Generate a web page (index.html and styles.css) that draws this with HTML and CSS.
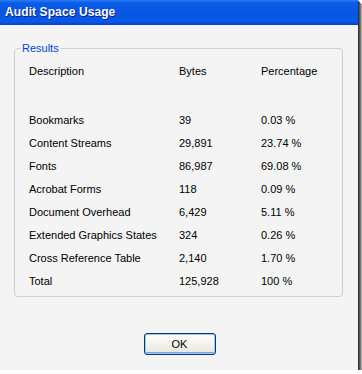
FILE: index.html
```html
<!DOCTYPE html>
<html>
<head>
  <meta charset="utf-8">
  <title>Audit Space Usage</title>
  <link rel="stylesheet" href="styles.css">
</head>
<body>
  <div class="window">
    <div class="titlebar">Audit Space Usage</div>
    <div class="client">
      <fieldset class="group">
        <legend>Results</legend>
        <div class="results">
          <div class="row head">
            <span>Description</span><span>Bytes</span><span>Percentage</span>
          </div>
          <div class="spacer"></div>
          <div class="row"><span>Bookmarks</span><span>39</span><span>0.03 %</span></div>
          <div class="row"><span>Content Streams</span><span>29,891</span><span>23.74 %</span></div>
          <div class="row"><span>Fonts</span><span>86,987</span><span>69.08 %</span></div>
          <div class="row"><span>Acrobat Forms</span><span>118</span><span>0.09 %</span></div>
          <div class="row"><span>Document Overhead</span><span>6,429</span><span>5.11 %</span></div>
          <div class="row"><span>Extended Graphics States</span><span>324</span><span>0.26 %</span></div>
          <div class="row"><span>Cross Reference Table</span><span>2,140</span><span>1.70 %</span></div>
          <div class="row"><span>Total</span><span>125,928</span><span>100 %</span></div>
        </div>
      </fieldset>
      <div class="buttons">
        <button class="btn">OK</button>
      </div>
    </div>
  </div>
</body>
</html>
```

FILE: styles.css
```css
html, body {
  margin: 0;
  background: #fff;
}
body {
  font-family: "Liberation Sans", Arial, sans-serif;
  font-size: 11px;
  color: #000;
}

.window {
  width: 358px;
  height: 370px;
  display: flex;
  flex-direction: column;
  background: #f4f4f4;
  box-shadow: 1px 1px 0 #333, 2px 2px 0 #555, 3px 3px 0 #7a7a7a, 4px 4px 0 #aaa;
}

.titlebar {
  height: 25px;
  line-height: 25px;
  padding-left: 5px;
  color: #fff;
  font-weight: bold;
  font-size: 12px;
  letter-spacing: 0.1px;
  text-shadow: 1px 1px 0 #0a1e8a;
  background: linear-gradient(to bottom, #2a7cf6 0%, #0a5ce6 12%, #0554e2 60%, #0a5ae8 85%, #0340c8 100%);
}

.client {
  flex: 1;
  padding: 17px 14px 0 14px;
  display: flex;
  flex-direction: column;
}

.group {
  margin: 0;
  width: 329px;
  box-sizing: border-box;
  padding: 4px 0 4px 0;
  border: 1px solid #d0d0bf;
  border-radius: 4px;
}
.group legend {
  color: #0046d5;
  padding: 0 2px;
  margin-left: 5px;
  line-height: 13px;
}
.results {
  padding-left: 14px;
}

.row {
  display: grid;
  grid-template-columns: 150px 82px 1fr;
  height: 23px;
  align-items: center;
}
.spacer {
  height: 26px;
}

.buttons {
  display: flex;
  justify-content: center;
  padding-top: 36px;
}
.btn {
  width: 72px;
  height: 22px;
  margin-left: 1px;
  font-family: inherit;
  font-size: 11px;
  color: #000;
  border: 1px solid #003c74;
  border-radius: 3px;
  background: linear-gradient(to bottom, #ffffff 0%, #f4f3ee 50%, #e8e6dc 100%);
  box-shadow: inset 0 0 0 1px #a6c6f2, inset 0 -1px 0 1px #7aa4e4;
  padding: 0;
}
```
